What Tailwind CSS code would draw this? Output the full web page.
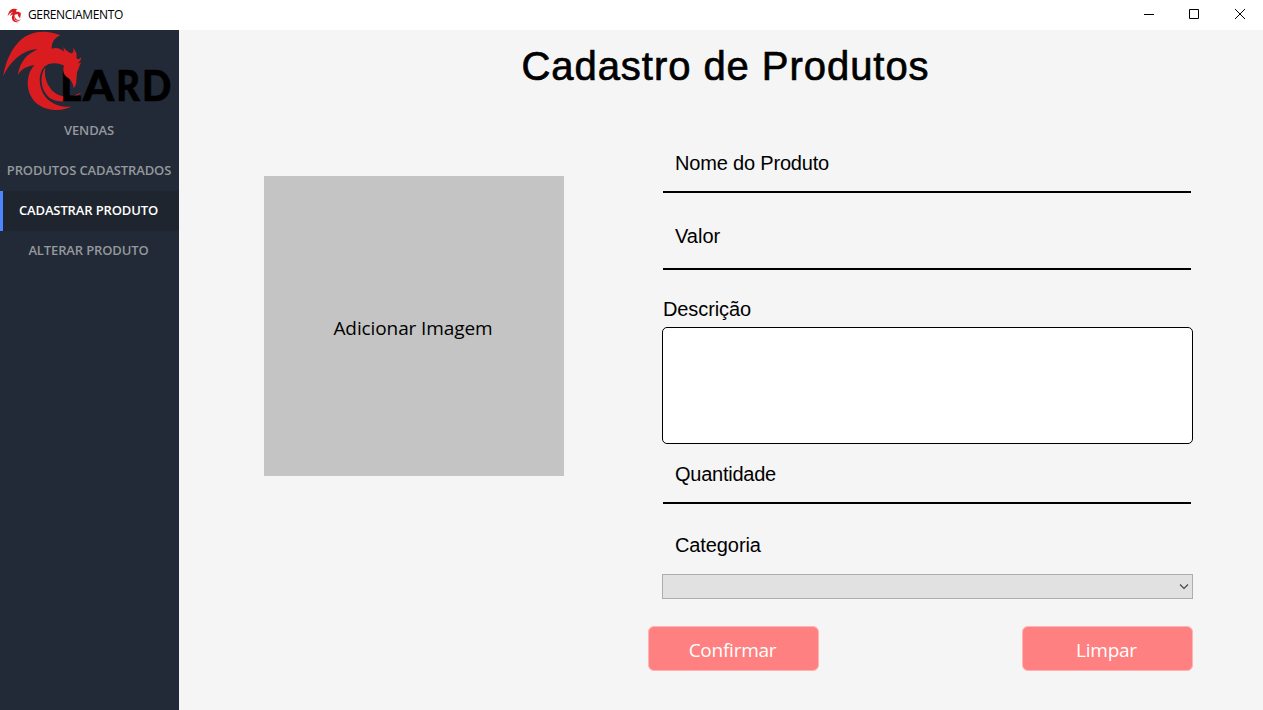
<!DOCTYPE html>
<html lang="pt-BR">
<head>
<meta charset="utf-8">
<title>GERENCIAMENTO</title>
<script src="https://cdn.jsdelivr.net/npm/@tailwindcss/browser@4"></script>
</head>
<body class="flex h-[710px] w-[1263px] flex-col overflow-hidden bg-[#f5f5f5] font-['Liberation_Sans',sans-serif] text-black">
<svg class="hidden">
  <symbol id="crescent" viewBox="0 0 270 258">
    <path fill="#d91c20" d="M136 118C120 140 120 178 141 202C163 228 210 228 244 193C216 211 179 210 157 188C138 167 132 144 136 118Z"/>
  </symbol>
  <symbol id="dragon" viewBox="0 0 270 258">
    <path fill="#d91c20" d="M10 144C18 90 47 34 92 18C120 8 152 10 181 22C164 29 155 42 155 62C170 58 181 61 192 71L190 57C197 65 201 71 213 76C220 76 222 68 219 59C228 70 232 78 229 89C234 97 240 92 244 86C244 95 239 102 232 106L243 104C240 112 236 116 236 123C228 133 232 145 229 155C230 166 226 174 221 181C220 167 213 155 203 149C190 140 187 129 192 113C169 102 148 104 133 116C113 137 115 180 136 206C155 230 184 238 214 236C181 251 144 249 118 232C89 213 77 177 86 143C88 133 94 122 103 112C82 114 65 122 54 141C56 118 70 84 103 69L113 63C67 66 31 99 10 144Z"/>
  </symbol>
</svg>

<header class="flex h-[30px] shrink-0 items-center bg-white pl-[7px]">
  <svg class="h-[15px] w-[15px]" viewBox="0 0 258 258"><use href="#crescent" width="270" height="258"/><use href="#dragon" width="270" height="258"/></svg>
  <span class="ml-[6px] font-['Open_Sans',sans-serif] text-[12px] leading-[30px] tracking-[-0.35px]">GERENCIAMENTO</span>
  <svg class="ml-auto h-[30px] w-[143px]" viewBox="0 0 143 30" fill="none" stroke="black">
    <path d="M24 14.5H34M69.500 9.500H78.500V18.500H69.500Z"/>
    <path d="M115 9L125 19M125 9L115 19"/>
  </svg>
</header>

<div class="flex min-h-0 grow">
  <aside class="flex w-[179px] shrink-0 flex-col bg-[#222a38] font-['Open_Sans',sans-serif] text-[13px] font-semibold text-[#95989c]">
    <svg class="h-[80px] w-[179px]" viewBox="0 0 537 240" font-family="Lato" font-weight="900" font-size="128" stroke="black" stroke-width="2">
      <use href="#crescent" y="-6" width="270" height="258" stroke="none"/>
      <text x="181" y="214" textLength="63" lengthAdjust="spacingAndGlyphs">L</text>
      <text x="248" y="214" textLength="94" lengthAdjust="spacingAndGlyphs">A</text>
      <text x="349" y="214" textLength="71" lengthAdjust="spacingAndGlyphs">R</text>
      <text x="426" y="214" textLength="88" lengthAdjust="spacingAndGlyphs">D</text>
      <use href="#dragon" y="-6" width="270" height="258" stroke="none"/>
    </svg>
    <nav class="flex flex-col text-center leading-[40px] tracking-[-0.13px] whitespace-nowrap">
      <a class="h-10 pr-px"><span>VENDAS</span></a>
      <a class="h-10 pr-px"><span>PRODUTOS CADASTRADOS</span></a>
      <a class="-mb-px mt-px h-10 border-l-[3px] border-[#4d84ff] bg-[#1e252e] pr-[5px] leading-[38px] text-white"><span>CADASTRAR PRODUTO</span></a>
      <a class="h-10 pr-[2px]"><span>ALTERAR PRODUTO</span></a>
    </nav>
  </aside>

  <main class="flex grow flex-col">
    <h1 class="mt-[13px] h-[46px] pl-[9px] text-center text-[40px] leading-[46px] tracking-[0.95px] [-webkit-text-stroke:0.7px_black]">Cadastro de Produtos</h1>
    <div class="flex">
      <div class="mt-[87px] ml-[85px] flex h-[300px] w-[300px] items-center justify-center bg-[#c4c4c4] pt-[5px] pr-[2px] font-['Open_Sans',sans-serif] text-[19px]"><span class="tracking-[-0.1px]">Adicionar Imagem</span></div>
      <form class="ml-[84px] flex w-[545px] flex-col pl-[14px] text-[20px] leading-[24px] tracking-[-0.18px]">
        <div class="mt-[62px] ml-px h-[42px] w-[528px] border-b-2 border-black pl-3"><span>Nome do Produto</span></div>
        <div class="mt-[31px] ml-px h-[46px] w-[528px] border-b-2 border-black pl-3"><span class="tracking-normal">Valor</span></div>
        <label class="mt-[27px] ml-px h-[30px]"><span class="tracking-[-0.1px]">Descrição</span></label>
        <div class="h-[117px] rounded-[5px] border border-black bg-white"></div>
        <div class="mt-[18px] ml-px h-[42px] w-[528px] border-b-2 border-black pl-3"><span class="tracking-[-0.25px]">Quantidade</span></div>
        <label class="mt-[29px] h-[41px] pl-[13px]"><span class="tracking-[-0.1px]">Categoria</span></label>
        <div class="flex h-[25px] items-center justify-end border border-[#adadad] bg-[#e1e1e1] pr-[3px]">
          <svg class="h-[7px] w-[10px]" viewBox="0 0 10 7" fill="none" stroke="#444" stroke-width="1.1"><path d="M1 1.500L5 5.500L9 1.500"/></svg>
        </div>
        <div class="mt-[27px] ml-[-14px] flex justify-between font-['Open_Sans',sans-serif] text-[19px] leading-[45px] text-white">
          <button type="button" class="h-[45px] w-[171px] rounded-[6px] border border-[#ffb3b3] bg-[#ff8080] pt-px pr-[2px]"><span class="tracking-[-0.25px]">Confirmar</span></button>
          <button type="button" class="h-[45px] w-[171px] rounded-[6px] border border-[#ffb3b3] bg-[#ff8080] pt-px pr-[2px]"><span class="tracking-[-0.25px]">Limpar</span></button>
        </div>
      </form>
    </div>
  </main>
</div>
</body>
</html>
